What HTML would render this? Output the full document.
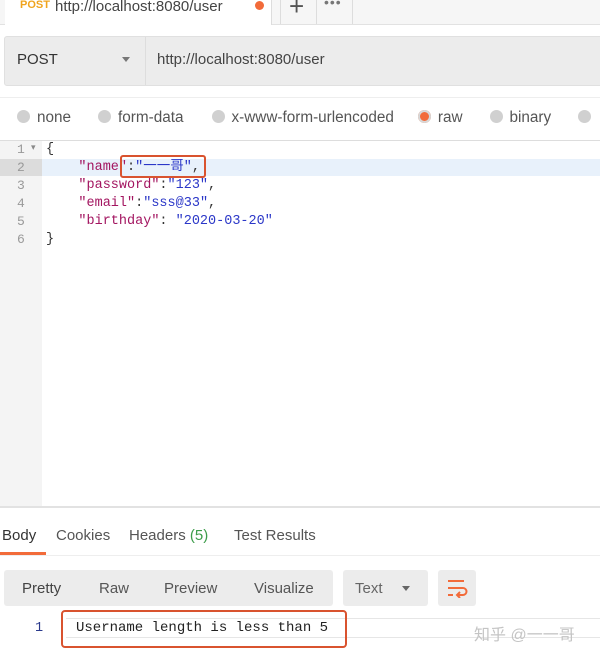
<!DOCTYPE html><html><head><meta charset="utf-8"><style>
body{margin:0;width:600px;height:656px;background:#fff;position:relative;overflow:hidden;font-family:"Liberation Sans","Noto Sans CJK SC",sans-serif;color:#333}
.a{position:absolute}
.m{font-family:"Liberation Mono","Noto Sans CJK SC",monospace;font-size:13.5px}
.k{color:#a31560}.s{color:#2b37c8}
.rad{display:inline-block;width:13px;height:13px;border-radius:50%;background:#d0d0d0;vertical-align:-1px;margin-right:7px}
</style></head><body>
<div class="a" style="left:0;top:0;width:600px;height:24px;background:#f6f6f6;border-bottom:1px solid #e2e2e2"></div>
<div class="a" style="left:5px;top:0;width:266px;height:25px;background:#fff;border-right:1px solid #ddd"></div>
<div class="a" style="left:20px;top:-1px;font-size:11px;color:#f0a41e;font-weight:bold">POST</div>
<div class="a" style="left:55px;top:-2px;font-size:15px;color:#444">http://localhost:8080/user</div>
<div class="a" style="left:255px;top:1px;width:9px;height:9px;border-radius:50%;background:#f26b3a"></div>
<div class="a" style="left:280px;top:0;width:1px;height:24px;background:#ddd"></div>
<div class="a" style="left:316px;top:0;width:1px;height:24px;background:#ddd"></div>
<div class="a" style="left:352px;top:0;width:1px;height:24px;background:#ddd"></div>
<div class="a" style="left:289px;top:-9px;font-size:26px;color:#555">+</div>
<div class="a" style="left:324px;top:-6px;font-size:14px;color:#777;letter-spacing:1px">•••</div>
<div class="a" style="left:4px;top:36px;width:600px;height:48px;background:#ececec;border-radius:3px;border:1px solid #e0e0e0"></div>
<div class="a" style="left:145px;top:37px;width:1px;height:48px;background:#ddd"></div>
<div class="a" style="left:17px;top:51px;font-size:15px;color:#333">POST</div>
<div class="a" style="left:122px;top:57px;border:4px solid transparent;border-top:5px solid #777"></div>
<div class="a" style="left:157px;top:51px;font-size:15px;color:#444">http://localhost:8080/user</div>
<div class="a" style="left:0;top:97px;width:600px;height:1px;background:#eee"></div>
<div class="a" style="left:17px;top:109px;font-size:15.3px;color:#555;white-space:nowrap"><span class="rad"></span>none<span style="margin-left:27px" class="rad"></span>form-data<span style="margin-left:28px" class="rad"></span>x-www-form-urlencoded<span style="margin-left:24px;background:#f26b3a;box-shadow:0 0 0 2px #d8d8d8 inset" class="rad"></span>raw<span style="margin-left:27px" class="rad"></span>binary<span style="margin-left:27px" class="rad"></span></div>
<div class="a" style="left:0;top:140px;width:600px;height:1px;background:#ddd"></div>
<div class="a" style="left:0;top:141px;width:42px;height:365px;background:#f4f4f4"></div>
<div class="a" style="left:42px;top:159px;width:558px;height:17px;background:#e8f1fb"></div>
<div class="a" style="left:0;top:159px;width:42px;height:17px;background:#dcdcdc"></div>
<div class="a m" style="left:17px;top:141px;line-height:18px;color:#999;font-size:13px">1<br>2<br>3<br>4<br>5<br>6</div>
<div class="a" style="left:31px;top:142px;font-size:9px;color:#888">▾</div>
<div class="a m" style="left:46px;top:141px;line-height:18px;white-space:pre;color:#333">{
    <span class="k">"name"</span>:<span class="s">"一一哥"</span>,
    <span class="k">"password"</span>:<span class="s">"123"</span>,
    <span class="k">"email"</span>:<span class="s">"sss@33"</span>,
    <span class="k">"birthday"</span>: <span class="s">"2020-03-20"</span>
}</div>
<div class="a" style="left:120px;top:155px;width:82px;height:19px;border:2px solid #d9532f;border-radius:3px"></div>
<div class="a" style="left:0;top:506px;width:600px;height:2px;background:#e2e2e2"></div>
<div class="a" style="left:2px;top:527px;font-size:15px;color:#333">Body</div>
<div class="a" style="left:56px;top:527px;font-size:15px;color:#555">Cookies</div>
<div class="a" style="left:129px;top:527px;font-size:15px;color:#555">Headers <span style="color:#3c9c4a">(5)</span></div>
<div class="a" style="left:234px;top:527px;font-size:15px;color:#555">Test Results</div>
<div class="a" style="left:0;top:552px;width:46px;height:3px;background:#f26b3a"></div>
<div class="a" style="left:0;top:555px;width:600px;height:1px;background:#eee"></div>
<div class="a" style="left:4px;top:570px;width:329px;height:36px;background:#ececec;border-radius:3px"></div>
<div class="a" style="left:22px;top:580px;font-size:15px;color:#444">Pretty</div>
<div class="a" style="left:99px;top:580px;font-size:15px;color:#555">Raw</div>
<div class="a" style="left:164px;top:580px;font-size:15px;color:#555">Preview</div>
<div class="a" style="left:254px;top:580px;font-size:15px;color:#555">Visualize</div>
<div class="a" style="left:343px;top:570px;width:85px;height:36px;background:#ececec;border-radius:3px"></div>
<div class="a" style="left:355px;top:580px;font-size:15px;color:#666">Text</div>
<div class="a" style="left:402px;top:586px;border:4px solid transparent;border-top:5px solid #666"></div>
<div class="a" style="left:438px;top:570px;width:38px;height:36px;background:#ececec;border-radius:3px"></div>
<svg class="a" style="left:446px;top:578px" width="24" height="20" viewBox="0 0 24 20"><path d="M2 3h16M2 10h15a3.5 3.5 0 0 1 0 7h-5M14 14l-3 3 3 3M2 17h5" stroke="#f26b3a" stroke-width="2" fill="none"/></svg>
<div class="a" style="left:66px;top:618px;width:534px;height:1px;background:#e6e6e6"></div>
<div class="a" style="left:66px;top:637px;width:534px;height:1px;background:#e6e6e6"></div>
<div class="a m" style="left:35px;top:621px;color:#2b3a8c">1</div>
<div class="a m" style="left:76px;top:620px;color:#222;font-size:14px">Username length is less than 5</div>
<div class="a" style="left:61px;top:610px;width:282px;height:34px;border:2px solid #d9532f;border-radius:4px"></div>
<div class="a" style="left:474px;top:621px;font-size:16px;color:#c4c4c4">知乎 @一一哥</div>
</body></html>
